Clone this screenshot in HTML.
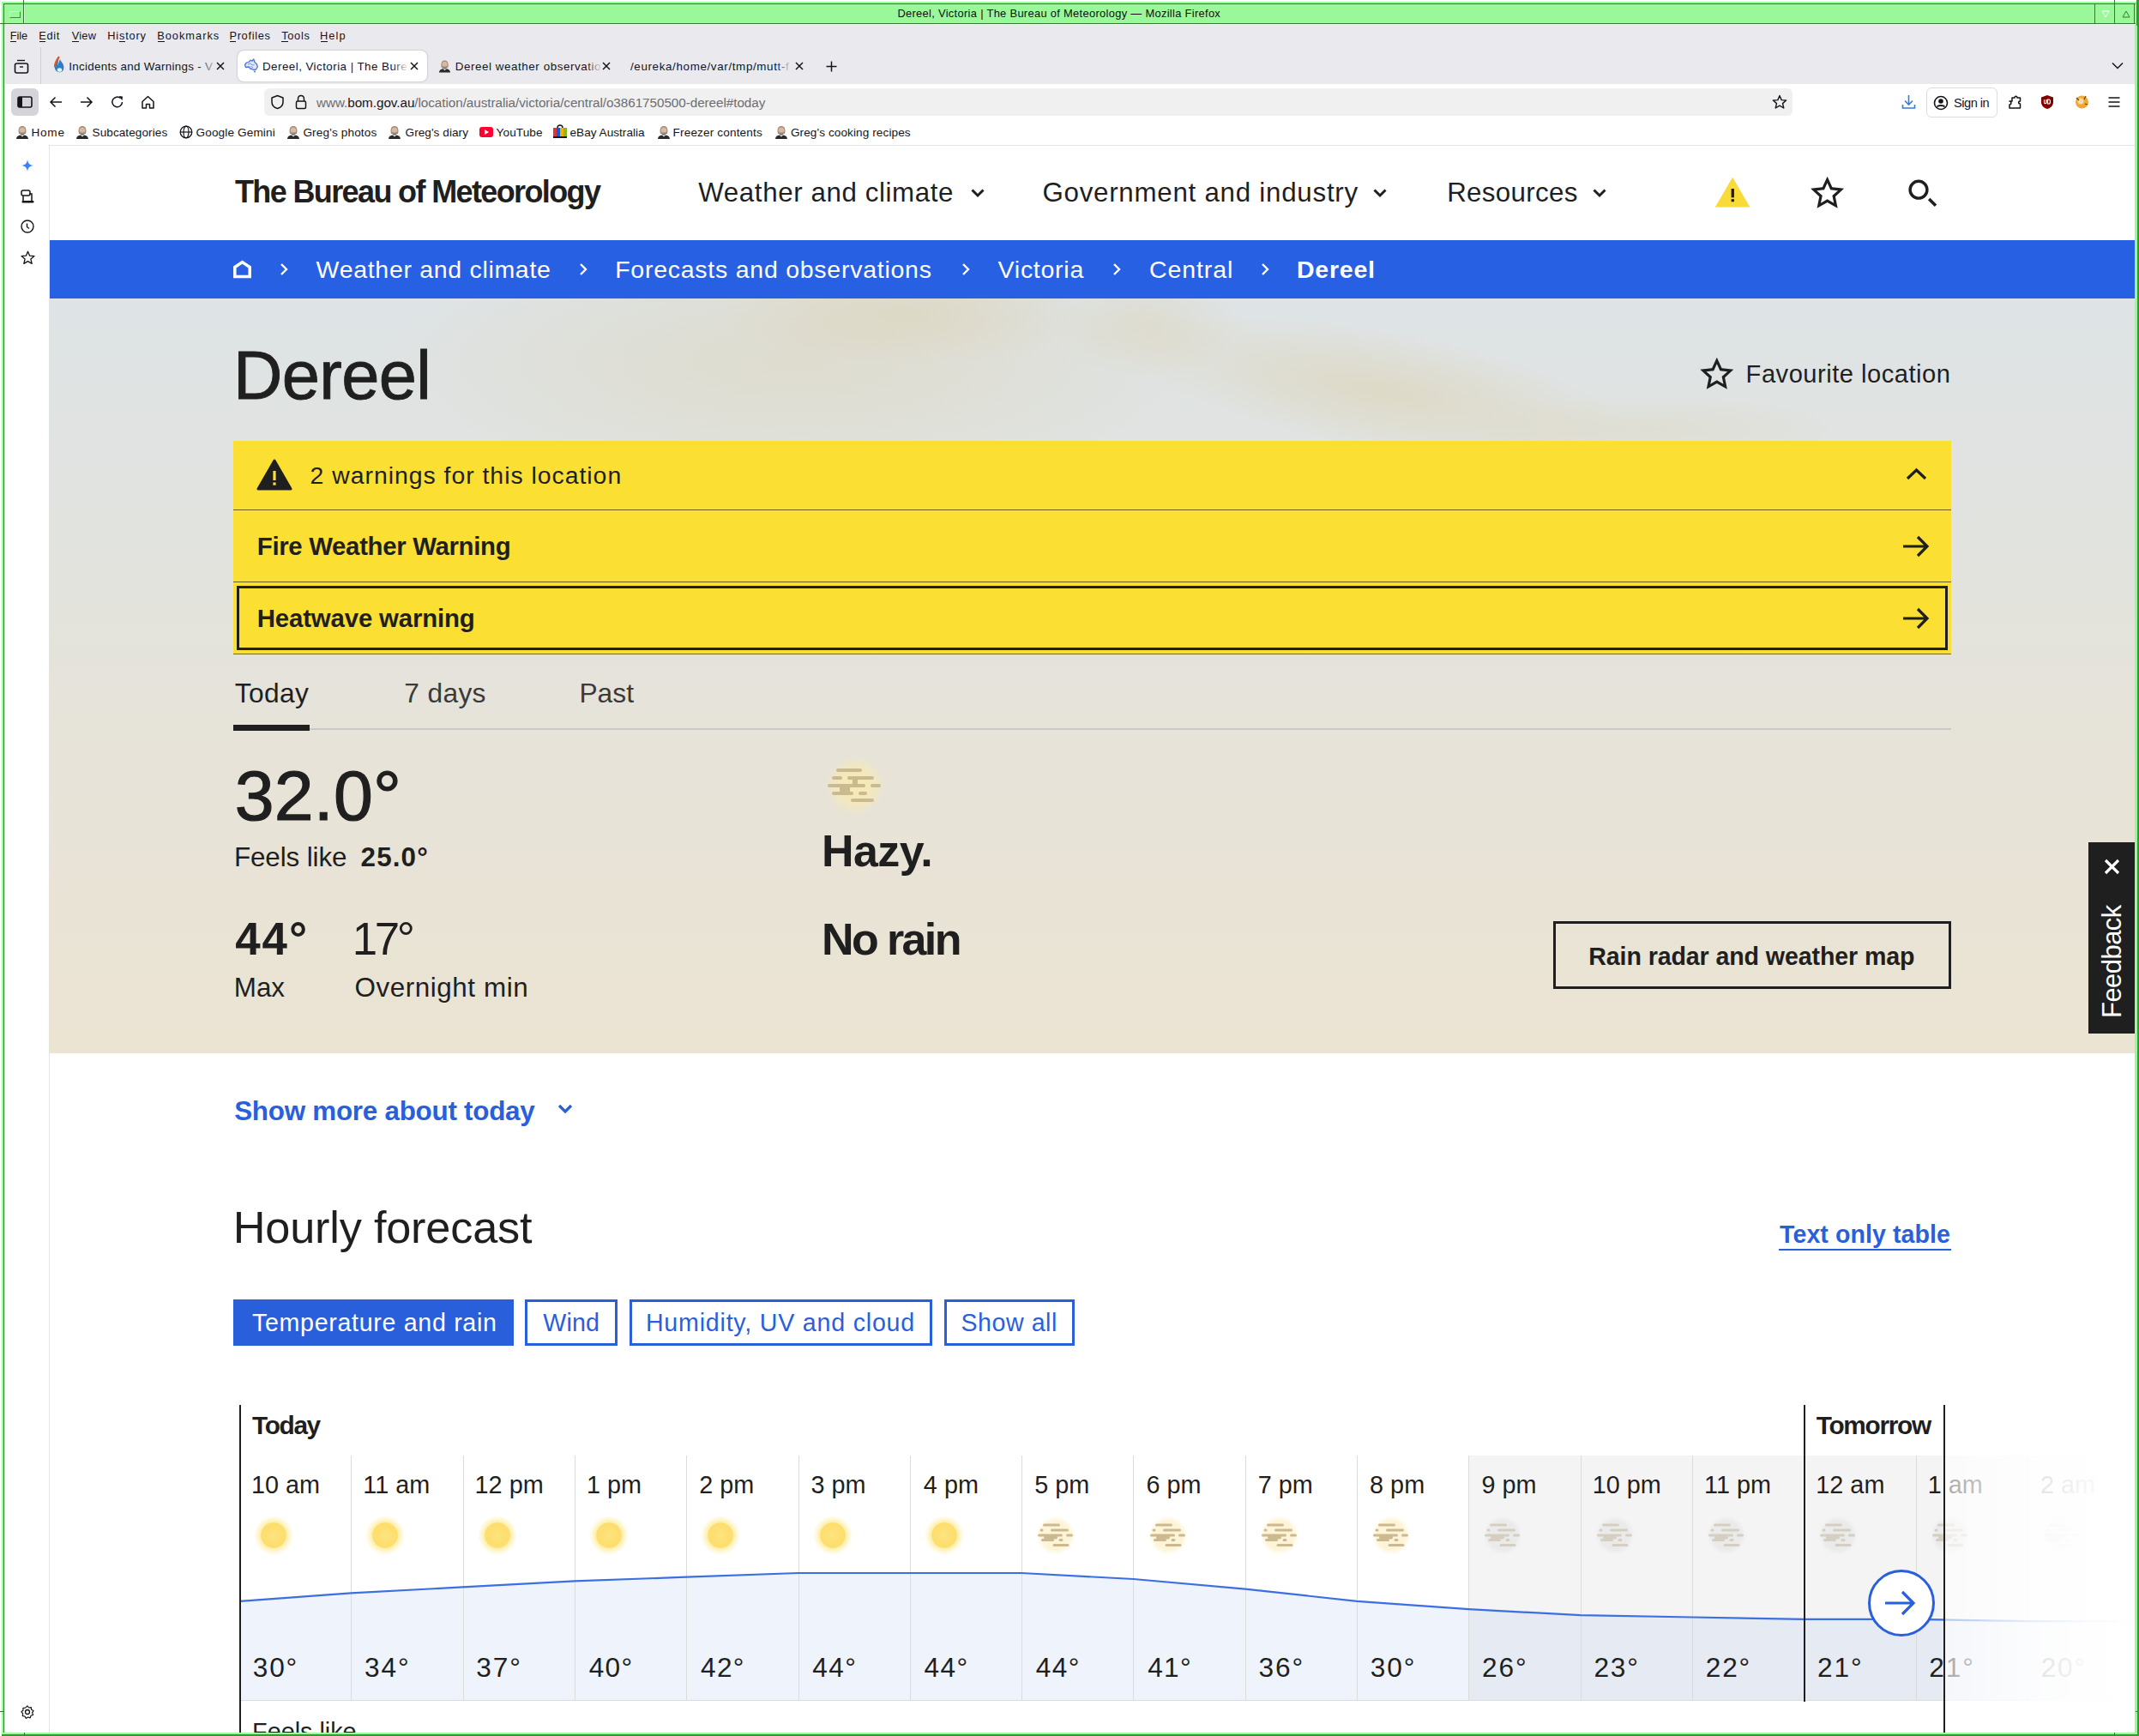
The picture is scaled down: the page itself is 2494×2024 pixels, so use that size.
<!DOCTYPE html>
<html><head><meta charset="utf-8">
<style>
html,body{margin:0;padding:0;}
body{width:2494px;height:2024px;overflow:hidden;position:relative;background:#fff;font-family:"Liberation Sans",sans-serif;}
.a{position:absolute;}
.t{position:absolute;white-space:nowrap;line-height:1;}
svg{position:absolute;overflow:visible;}
</style></head><body>
<!-- window frame -->
<div class="a" style="left:2px;top:2px;width:2492px;height:2022px;background:#9af89a;"></div>
<div class="a" style="left:2492px;top:30px;width:2px;height:1994px;background:#339933;"></div>
<div class="a" style="left:2px;top:2022px;width:2492px;height:2px;background:#339933;"></div>
<div class="a" style="left:4px;top:4px;width:1px;height:2016px;background:#2f7f2f;"></div>
<div class="a" style="left:4px;top:4px;width:2486px;height:1px;background:#2f7f2f;"></div>
<div class="a" style="left:0px;top:27px;width:2490px;height:1px;background:#2f7f2f;"></div>
<div class="a" style="left:27px;top:0px;width:1px;height:28px;background:#2f7f2f;"></div>
<div class="a" style="left:28px;top:5px;width:1px;height:22px;background:#d8ffd8;"></div>
<div class="a" style="left:5px;top:28px;width:1px;height:1992px;background:#e6ffe6;"></div>
<div class="a" style="left:5px;top:28px;width:2485px;height:1px;background:#e6ffe6;"></div>
<div class="a" style="left:11px;top:13px;width:11px;height:6px;border:1px solid #3a8a3a;border-top-color:#c8ffc8;border-left-color:#c8ffc8;"></div>
<div class="a" style="left:2442px;top:5px;width:1px;height:22px;background:#2f7f2f;"></div>
<div class="a" style="left:2465px;top:0px;width:1px;height:27px;background:#2f7f2f;"></div>
<div class="a" style="left:2488px;top:5px;width:1px;height:22px;background:#2f7f2f;"></div>
<div class="a" style="left:2491px;top:0px;width:3px;height:30px;background:#339933;"></div>
<svg style="left:2450px;top:12px" width="12" height="10"><path d="M1 1 L9 1 L5 8 Z" fill="none" stroke="#fff" stroke-width="1"/></svg>
<svg style="left:2474px;top:12px" width="12" height="10"><path d="M5 1 L9 8 L1 8 Z" fill="none" stroke="#2f7f2f" stroke-width="1"/></svg>

<!-- browser chrome -->
<div class="a" style="left:6px;top:29px;width:2483px;height:69px;background:#eaeaee;"></div>
<div class="a" style="left:6px;top:98px;width:2483px;height:71px;background:#ffffff;"></div>
<!-- menu underlines -->
<div class="a" style="left:12px;top:48px;width:7px;height:1px;background:#15141a;"></div>
<div class="a" style="left:46px;top:48px;width:7px;height:1px;background:#15141a;"></div>
<div class="a" style="left:84px;top:48px;width:8px;height:1px;background:#15141a;"></div>
<div class="a" style="left:139px;top:48px;width:7px;height:1px;background:#15141a;"></div>
<div class="a" style="left:184px;top:48px;width:8px;height:1px;background:#15141a;"></div>
<div class="a" style="left:268px;top:48px;width:7px;height:1px;background:#15141a;"></div>
<div class="a" style="left:328px;top:48px;width:8px;height:1px;background:#15141a;"></div>
<div class="a" style="left:374px;top:48px;width:8px;height:1px;background:#15141a;"></div>

<!-- tab strip -->
<svg style="left:16px;top:69px" width="18" height="18"><path d="M4 1.5 H13" stroke="#15141a" stroke-width="1.4"/><rect x="1.5" y="5" width="15" height="11" rx="2" fill="none" stroke="#15141a" stroke-width="1.6"/><path d="M7 9 H11" stroke="#15141a" stroke-width="1.4"/></svg>
<div class="a" style="left:47px;top:55px;width:1px;height:43px;background:#cfcfd4;"></div>
<!-- tab1 favicon (flame) -->
<svg style="left:61px;top:64px" width="16" height="22"><path d="M8 2 C3 8 2 12 3 16 C4 20 8 21 10 20 C13 19 14 16 13 12 C12 9 10 8 9 5 C8 8 7 10 6 13 Z" fill="#2b7fc1"/><path d="M8 2 C5 6 3 9 3 14" stroke="#e2562a" stroke-width="2.2" fill="none"/><ellipse cx="8.5" cy="17.5" rx="2.8" ry="2.3" fill="#e8f2fa"/></svg>
<div class="a" style="left:232px;top:64px;width:22px;height:26px;background:linear-gradient(90deg, rgba(234,234,238,0) 0%, #eaeaee 100%);z-index:2"></div>
<svg style="left:252px;top:72px;z-index:3" width="10" height="10"><path d="M1 1 L9 9 M9 1 L1 9" stroke="#15141a" stroke-width="1.5"/></svg>
<!-- active tab -->
<div class="a" style="left:277px;top:59px;width:221px;height:36px;background:#fff;border-radius:7px;box-shadow:0 0 2px rgba(0,0,0,0.35);"></div>
<svg style="left:284px;top:67px" width="18" height="18"><path d="M1.5 8.5 L3.5 6 L6.5 5 L8 3.2 L10 4.2 L11.8 2 L13 5.5 L15.5 8 L16.3 11 L14.5 14 L11.5 14.5 L10 13.5 L7.5 13 L6.5 11 L2.5 11.5 Z" fill="#dde6fb" stroke="#4f74d6" stroke-width="1.3" stroke-linejoin="round"/><path d="M5 8 L8 7 L10 9 L12.5 8.5 M8.5 10.5 L11 12" fill="none" stroke="#6f8fe0" stroke-width="0.9"/><circle cx="13" cy="16.5" r="1" fill="#4f74d6"/></svg>
<div class="a" style="left:458px;top:64px;width:18px;height:26px;background:linear-gradient(90deg, rgba(255,255,255,0) 0%, #fff 100%);z-index:2"></div>
<svg style="left:478px;top:72px;z-index:3" width="10" height="10"><path d="M1 1 L9 9 M9 1 L1 9" stroke="#15141a" stroke-width="1.5"/></svg>
<!-- tab3 -->
<svg style="left:511px;top:69px" width="15" height="16" viewBox="0 0 16 16"><path d="M3.5 7 C3.5 2.5 5.5 1 8 1 C10.5 1 12.5 2.5 12.5 7 L12 10 L4 10 Z" fill="#a58a74"/><ellipse cx="8" cy="6.5" rx="3.4" ry="4" fill="#d9b9a0"/><path d="M4.4 6.8 C4.4 13.5 11.6 13.5 11.6 6.8 C10.5 9.2 5.5 9.2 4.4 6.8 Z" fill="#9a9088"/><path d="M6 10 C7 11 9 11 10 10" stroke="#6a5f58" stroke-width="0.8" fill="none"/><path d="M1 16 C1.5 12.5 4 11.8 6 11.5 L8 13.5 L10 11.5 C12 11.8 14.5 12.5 15 16 Z" fill="#2a2a2a"/></svg>
<div class="a" style="left:684px;top:64px;width:18px;height:26px;background:linear-gradient(90deg, rgba(234,234,238,0) 0%, #eaeaee 100%);z-index:2"></div>
<svg style="left:702px;top:72px;z-index:3" width="10" height="10"><path d="M1 1 L9 9 M9 1 L1 9" stroke="#15141a" stroke-width="1.5"/></svg>
<!-- tab4 -->
<div class="a" style="left:905px;top:64px;width:18px;height:26px;background:linear-gradient(90deg, rgba(234,234,238,0) 0%, #eaeaee 100%);z-index:2"></div>
<svg style="left:927px;top:72px;z-index:3" width="10" height="10"><path d="M1 1 L9 9 M9 1 L1 9" stroke="#15141a" stroke-width="1.5"/></svg>
<svg style="left:963px;top:71px" width="13" height="13"><path d="M6.5 0.5 V12.5 M0.5 6.5 H12.5" stroke="#15141a" stroke-width="1.5"/></svg>
<svg style="left:2462px;top:72px" width="14" height="9"><path d="M1 1.5 L7 7.5 L13 1.5" fill="none" stroke="#15141a" stroke-width="1.5"/></svg>

<!-- nav bar -->
<div class="a" style="left:13px;top:103px;width:32px;height:32px;background:#d4d4da;border-radius:6px;"></div>
<svg style="left:20px;top:112px" width="18" height="14"><rect x="1" y="1" width="16" height="12" rx="2" fill="none" stroke="#15141a" stroke-width="1.6"/><rect x="1" y="1" width="5" height="12" fill="#15141a"/></svg>
<svg style="left:57px;top:112px" width="16" height="14"><path d="M15 7 H2 M7.5 1.5 L2 7 L7.5 12.5" fill="none" stroke="#15141a" stroke-width="1.5"/></svg>
<svg style="left:93px;top:112px" width="16" height="14"><path d="M1 7 H14 M8.5 1.5 L14 7 L8.5 12.5" fill="none" stroke="#15141a" stroke-width="1.5"/></svg>
<svg style="left:129px;top:111px" width="16" height="16"><path d="M13.5 8 A5.8 5.8 0 1 1 11.5 3.5" fill="none" stroke="#15141a" stroke-width="1.5"/><path d="M9.5 1 L14 1.5 L13.5 6 Z" fill="#15141a"/></svg>
<svg style="left:164px;top:111px" width="17" height="16"><path d="M2 7.5 L8.5 1.5 L15 7.5 V15 H10.5 V10.5 H6.5 V15 H2 Z" fill="none" stroke="#15141a" stroke-width="1.5" stroke-linejoin="round"/></svg>
<div class="a" style="left:308px;top:103px;width:1782px;height:32px;background:#f0f0f0;border-radius:6px;"></div>
<svg style="left:315px;top:110px" width="17" height="18"><path d="M8.5 1.5 L15 4 V9 C15 13 12 15.5 8.5 16.5 C5 15.5 2 13 2 9 V4 Z" fill="none" stroke="#15141a" stroke-width="1.5" stroke-linejoin="round"/></svg>
<svg style="left:344px;top:110px" width="14" height="18"><path d="M3.5 8 V5.5 C3.5 3 5 1.5 7 1.5 C9 1.5 10.5 3 10.5 5.5 V8" fill="none" stroke="#15141a" stroke-width="1.5"/><rect x="1.5" y="8" width="11" height="8.5" rx="1.5" fill="none" stroke="#15141a" stroke-width="1.5"/></svg>
<div class="t" style="left:369px;top:111.5px;font-size:15.25px;color:#6d6d72;letter-spacing:-0.05px;">www.<span style="color:#15141a">bom.gov.au</span>/location/australia/victoria/central/o3861750500-dereel#today</div>
<svg style="left:2066px;top:110px" width="18" height="18"><path d="M9 1.5 L11.2 6.6 L16.6 7 L12.5 10.6 L13.8 16 L9 13.2 L4.2 16 L5.5 10.6 L1.4 7 L6.8 6.6 Z" fill="none" stroke="#15141a" stroke-width="1.4" stroke-linejoin="round"/></svg>
<svg style="left:2217px;top:110px" width="17" height="18"><path d="M8.5 1 V12 M4 7.5 L8.5 12 L13 7.5" fill="none" stroke="#3a7bd5" stroke-width="1.6"/><path d="M1.5 12 V16 H15.5 V12" fill="none" stroke="#3a7bd5" stroke-width="1.6"/></svg>
<div class="a" style="left:2246px;top:102px;width:81px;height:33px;border:1px solid #dcdce0;border-radius:6px;"></div>
<svg style="left:2254px;top:111px" width="18" height="18"><circle cx="9" cy="9" r="7.5" fill="none" stroke="#15141a" stroke-width="1.6"/><circle cx="9" cy="7" r="2.8" fill="#15141a"/><path d="M4.5 13.5 C6 11.5 12 11.5 13.5 13.5" stroke="#15141a" stroke-width="2" fill="none"/></svg>
<svg style="left:2341px;top:110px" width="17" height="18"><path d="M2 8 H5 V4 H8 C8 1.5 11 1.5 11 4 H14.5 V8 C12 8 12 11 14.5 11 V16 H2 V12 C4.5 12 4.5 8 2 8 Z" fill="none" stroke="#15141a" stroke-width="1.5" stroke-linejoin="round"/></svg>
<svg style="left:2379px;top:110px" width="16" height="18"><path d="M8 1 L15 3.5 V9 C15 13 12 16 8 17 C4 16 1 13 1 9 V3.5 Z" fill="#800000"/><path d="M4.5 6 V9.5 C4.5 11 7 11 7 9.5 V6 M8.5 6 V11 H10 C12 11 12 6 10 6 Z" fill="none" stroke="#fff" stroke-width="1.2"/></svg>
<svg style="left:2418px;top:109px" width="19" height="19"><circle cx="9.5" cy="10" r="7.5" fill="#f0a830"/><circle cx="8" cy="9" r="3.5" fill="#fff" opacity="0.6"/><path d="M3 5 L6 8 M14 3 L12 7 M16 13 L13 12" stroke="#6a4a10" stroke-width="1.3"/></svg>
<svg style="left:2457px;top:112px" width="16" height="14"><path d="M1.5 2 H14.5 M1.5 7 H14.5 M1.5 12 H14.5" stroke="#15141a" stroke-width="1.5"/></svg>

<!-- bookmarks icons -->
<svg style="left:18px;top:146px" width="16" height="16" viewBox="0 0 16 16"><path d="M3.5 7 C3.5 2.5 5.5 1 8 1 C10.5 1 12.5 2.5 12.5 7 L12 10 L4 10 Z" fill="#a58a74"/><ellipse cx="8" cy="6.5" rx="3.4" ry="4" fill="#d9b9a0"/><path d="M4.4 6.8 C4.4 13.5 11.6 13.5 11.6 6.8 C10.5 9.2 5.5 9.2 4.4 6.8 Z" fill="#9a9088"/><path d="M6 10 C7 11 9 11 10 10" stroke="#6a5f58" stroke-width="0.8" fill="none"/><path d="M1 16 C1.5 12.5 4 11.8 6 11.5 L8 13.5 L10 11.5 C12 11.8 14.5 12.5 15 16 Z" fill="#2a2a2a"/></svg>
<svg style="left:88px;top:146px" width="16" height="16" viewBox="0 0 16 16"><path d="M3.5 7 C3.5 2.5 5.5 1 8 1 C10.5 1 12.5 2.5 12.5 7 L12 10 L4 10 Z" fill="#a58a74"/><ellipse cx="8" cy="6.5" rx="3.4" ry="4" fill="#d9b9a0"/><path d="M4.4 6.8 C4.4 13.5 11.6 13.5 11.6 6.8 C10.5 9.2 5.5 9.2 4.4 6.8 Z" fill="#9a9088"/><path d="M6 10 C7 11 9 11 10 10" stroke="#6a5f58" stroke-width="0.8" fill="none"/><path d="M1 16 C1.5 12.5 4 11.8 6 11.5 L8 13.5 L10 11.5 C12 11.8 14.5 12.5 15 16 Z" fill="#2a2a2a"/></svg>
<svg style="left:209px;top:146px" width="16" height="16"><circle cx="8" cy="8" r="6.8" fill="none" stroke="#15141a" stroke-width="1.3"/><ellipse cx="8" cy="8" rx="3" ry="6.8" fill="none" stroke="#15141a" stroke-width="1.2"/><path d="M1.2 8 H14.8" stroke="#15141a" stroke-width="1.2"/></svg>
<svg style="left:334px;top:146px" width="16" height="16" viewBox="0 0 16 16"><path d="M3.5 7 C3.5 2.5 5.5 1 8 1 C10.5 1 12.5 2.5 12.5 7 L12 10 L4 10 Z" fill="#a58a74"/><ellipse cx="8" cy="6.5" rx="3.4" ry="4" fill="#d9b9a0"/><path d="M4.4 6.8 C4.4 13.5 11.6 13.5 11.6 6.8 C10.5 9.2 5.5 9.2 4.4 6.8 Z" fill="#9a9088"/><path d="M6 10 C7 11 9 11 10 10" stroke="#6a5f58" stroke-width="0.8" fill="none"/><path d="M1 16 C1.5 12.5 4 11.8 6 11.5 L8 13.5 L10 11.5 C12 11.8 14.5 12.5 15 16 Z" fill="#2a2a2a"/></svg>
<svg style="left:452px;top:146px" width="16" height="16" viewBox="0 0 16 16"><path d="M3.5 7 C3.5 2.5 5.5 1 8 1 C10.5 1 12.5 2.5 12.5 7 L12 10 L4 10 Z" fill="#a58a74"/><ellipse cx="8" cy="6.5" rx="3.4" ry="4" fill="#d9b9a0"/><path d="M4.4 6.8 C4.4 13.5 11.6 13.5 11.6 6.8 C10.5 9.2 5.5 9.2 4.4 6.8 Z" fill="#9a9088"/><path d="M6 10 C7 11 9 11 10 10" stroke="#6a5f58" stroke-width="0.8" fill="none"/><path d="M1 16 C1.5 12.5 4 11.8 6 11.5 L8 13.5 L10 11.5 C12 11.8 14.5 12.5 15 16 Z" fill="#2a2a2a"/></svg>
<svg style="left:559px;top:148px" width="16" height="12"><rect x="0" y="0" width="16" height="12" rx="3" fill="#ff0033"/><path d="M6 3 L11 6 L6 9 Z" fill="#fff"/></svg>
<svg style="left:645px;top:144px" width="16" height="18"><path d="M5 5 C5 1 11 1 11 5" stroke="#15141a" stroke-width="1.4" fill="none"/><rect x="0" y="5" width="4" height="12" fill="#e53238"/><rect x="4" y="5" width="4" height="12" fill="#0064d2"/><rect x="8" y="5" width="4" height="12" fill="#f5af02"/><rect x="12" y="5" width="4" height="12" fill="#86b817"/><rect x="0" y="15" width="16" height="2" fill="#15141a"/></svg>
<svg style="left:766px;top:146px" width="16" height="16" viewBox="0 0 16 16"><path d="M3.5 7 C3.5 2.5 5.5 1 8 1 C10.5 1 12.5 2.5 12.5 7 L12 10 L4 10 Z" fill="#a58a74"/><ellipse cx="8" cy="6.5" rx="3.4" ry="4" fill="#d9b9a0"/><path d="M4.4 6.8 C4.4 13.5 11.6 13.5 11.6 6.8 C10.5 9.2 5.5 9.2 4.4 6.8 Z" fill="#9a9088"/><path d="M6 10 C7 11 9 11 10 10" stroke="#6a5f58" stroke-width="0.8" fill="none"/><path d="M1 16 C1.5 12.5 4 11.8 6 11.5 L8 13.5 L10 11.5 C12 11.8 14.5 12.5 15 16 Z" fill="#2a2a2a"/></svg>
<svg style="left:903px;top:146px" width="16" height="16" viewBox="0 0 16 16"><path d="M3.5 7 C3.5 2.5 5.5 1 8 1 C10.5 1 12.5 2.5 12.5 7 L12 10 L4 10 Z" fill="#a58a74"/><ellipse cx="8" cy="6.5" rx="3.4" ry="4" fill="#d9b9a0"/><path d="M4.4 6.8 C4.4 13.5 11.6 13.5 11.6 6.8 C10.5 9.2 5.5 9.2 4.4 6.8 Z" fill="#9a9088"/><path d="M6 10 C7 11 9 11 10 10" stroke="#6a5f58" stroke-width="0.8" fill="none"/><path d="M1 16 C1.5 12.5 4 11.8 6 11.5 L8 13.5 L10 11.5 C12 11.8 14.5 12.5 15 16 Z" fill="#2a2a2a"/></svg>


<!-- content area -->
<div class="a" style="left:6px;top:169px;width:2483px;height:1851px;background:#ffffff;"></div>
<div class="a" style="left:57px;top:169px;width:2432px;height:1px;background:#e3e3e8;"></div>
<div class="a" style="left:57px;top:169px;width:1px;height:1851px;background:#e3e3e8;"></div>
<svg style="left:25px;top:186px" width="14" height="14"><path d="M7 0 C7.6 4.5 9.5 6.4 14 7 C9.5 7.6 7.6 9.5 7 14 C6.4 9.5 4.5 7.6 0 7 C4.5 6.4 6.4 4.5 7 0 Z" fill="#3b82f6"/></svg>
<svg style="left:24px;top:221px" width="17" height="17"><rect x="1" y="1" width="10" height="6" rx="2" fill="none" stroke="#15141a" stroke-width="1.5"/><path d="M10 5 H13 V13" fill="none" stroke="#15141a" stroke-width="1.5"/><path d="M3 7 V13" stroke="#15141a" stroke-width="1.5"/><rect x="1.5" y="13" width="14" height="2.5" rx="1" fill="#15141a"/></svg>
<svg style="left:24px;top:256px" width="16" height="16"><circle cx="8" cy="8" r="7" fill="none" stroke="#15141a" stroke-width="1.4"/><path d="M7.5 4.5 V8.5 L10 10.5" fill="none" stroke="#15141a" stroke-width="1.4"/></svg>
<svg style="left:24px;top:292px" width="17" height="17"><path d="M8.5 1.2 L10.6 6.2 L16 6.6 L11.9 10.1 L13.2 15.4 L8.5 12.6 L3.8 15.4 L5.1 10.1 L1 6.6 L6.4 6.2 Z" fill="none" stroke="#15141a" stroke-width="1.3" stroke-linejoin="round"/></svg>
<svg style="left:24px;top:1988px" width="16" height="16"><circle cx="8" cy="8" r="2.5" fill="none" stroke="#15141a" stroke-width="1.3"/><path d="M8 1 L9.6 3 L12.3 2.6 L12.6 5.2 L15 6.6 L13.6 8.9 L14.6 11.5 L12 12.3 L11.2 14.9 L8.6 14 L6.3 15.4 L5 13 L2.3 12.6 L2.7 9.9 L1 7.8 L3 6 L2.9 3.3 L5.6 3.1 Z" fill="none" stroke="#15141a" stroke-width="1.2" stroke-linejoin="round"/></svg>

<!-- header icons -->
<svg style="left:1131px;top:218px" width="18" height="14"><path d="M2.5 3.5 L9 10 L15.5 3.5" fill="none" stroke="#1f1f1f" stroke-width="3"/></svg>
<svg style="left:1600px;top:218px" width="18" height="14"><path d="M2.5 3.5 L9 10 L15.5 3.5" fill="none" stroke="#1f1f1f" stroke-width="3"/></svg>
<svg style="left:1856px;top:218px" width="18" height="14"><path d="M2.5 3.5 L9 10 L15.5 3.5" fill="none" stroke="#1f1f1f" stroke-width="3"/></svg>
<svg style="left:1996px;top:203px" width="48" height="42"><path d="M24.1 3.8 L44.4 38.5 L3.8 38.5 Z" fill="#f9db38"/><rect x="22.6" y="17" width="3.3" height="10.3" fill="#22180a"/><rect x="22.6" y="29.2" width="3.3" height="3" fill="#22180a"/></svg>
<svg style="left:0;top:0" width="2494" height="300"><path d="M2130.60 205.70 L2136.36 218.27 L2150.10 219.87 L2139.92 229.23 L2142.65 242.78 L2130.60 236.00 L2118.55 242.78 L2121.28 229.23 L2111.10 219.87 L2124.84 218.27 Z M2127.01 221.26 L2118.24 222.18 L2124.80 228.09 L2122.96 236.72 L2130.60 232.30 L2138.24 236.72 L2136.40 228.09 L2142.96 222.18 L2134.19 221.26 L2130.60 213.20 Z" fill="#1f1f1f" fill-rule="evenodd"/></svg>
<svg style="left:2220px;top:204px" width="44" height="44"><circle cx="17" cy="17.2" r="9.9" fill="none" stroke="#1f1f1f" stroke-width="3.4"/><path d="M29.2 28 L37 35.8" stroke="#1f1f1f" stroke-width="3.6" stroke-linecap="butt"/></svg>

<!-- breadcrumb band -->
<div class="a" style="left:58px;top:280px;width:2431px;height:68px;background:#2860e4;"></div>
<svg style="left:270px;top:300px" width="26" height="26"><path d="M3.8 22.4 V11.5 L12.5 5.6 L21.2 11.5 V22.4 Z" fill="none" stroke="#fff" stroke-width="3.5" stroke-linejoin="miter"/></svg>
<svg style="left:324px;top:305px" width="14" height="18"><path d="M4 3 L10 9 L4 15" fill="none" stroke="#fff" stroke-width="2.4"/></svg>
<svg style="left:673px;top:305px" width="14" height="18"><path d="M4 3 L10 9 L4 15" fill="none" stroke="#fff" stroke-width="2.4"/></svg>
<svg style="left:1119px;top:305px" width="14" height="18"><path d="M4 3 L10 9 L4 15" fill="none" stroke="#fff" stroke-width="2.4"/></svg>
<svg style="left:1295px;top:305px" width="14" height="18"><path d="M4 3 L10 9 L4 15" fill="none" stroke="#fff" stroke-width="2.4"/></svg>
<svg style="left:1468px;top:305px" width="14" height="18"><path d="M4 3 L10 9 L4 15" fill="none" stroke="#fff" stroke-width="2.4"/></svg>

<!-- hero -->
<div class="a" style="left:58px;top:348px;width:2431px;height:880px;background:linear-gradient(180deg,#dee3e5 0%,#e1e3df 30%,#e7e3d8 62%,#ebe4d3 100%);overflow:hidden;">
  <div class="a" style="left:392px;top:-78px;width:960px;height:300px;background:radial-gradient(ellipse closest-side, rgba(220,203,158,0.3) 0%, rgba(220,203,158,0.165) 50%, rgba(220,203,158,0) 100%);"></div>
  <div class="a" style="left:782px;top:-43px;width:440px;height:120px;background:radial-gradient(ellipse closest-side, rgba(220,203,158,0.32) 0%, rgba(220,203,158,0.176) 50%, rgba(220,203,158,0) 100%);"></div>
  <div class="a" style="left:1172px;top:-28px;width:220px;height:120px;background:radial-gradient(ellipse closest-side, rgba(220,203,158,0.28) 0%, rgba(220,203,158,0.154) 50%, rgba(220,203,158,0) 100%);"></div>
  <div class="a" style="left:1252px;top:37px;width:600px;height:140px;transform:rotate(10deg);background:radial-gradient(ellipse closest-side, rgba(220,203,158,0.4) 0%, rgba(220,203,158,0.220) 50%, rgba(220,203,158,0) 100%);"></div>
  <div class="a" style="left:1652px;top:112px;width:440px;height:80px;background:radial-gradient(ellipse closest-side, rgba(220,203,158,0.2) 0%, rgba(220,203,158,0.110) 50%, rgba(220,203,158,0) 100%);"></div>
  <div class="a" style="left:542px;top:292px;width:1400px;height:120px;background:radial-gradient(ellipse closest-side, rgba(220,203,158,0.1) 0%, rgba(220,203,158,0.055) 50%, rgba(220,203,158,0) 100%);"></div>
</div>

<!-- warnings -->
<div class="a" style="left:272px;top:514px;width:2003px;height:249px;background:#fbdf33;"></div>
<div class="a" style="left:272px;top:594px;width:2003px;height:1px;background:#6b5e1a;"></div>
<div class="a" style="left:272px;top:678px;width:2003px;height:1px;background:#6b5e1a;"></div>
<div class="a" style="left:276px;top:683px;width:1989px;height:69px;border:3px solid #1f1f1f;"></div>
<div class="a" style="left:272px;top:762px;width:2003px;height:1px;background:#7a6a1c;"></div>
<svg style="left:298px;top:533px" width="46" height="42"><path d="M22 4 L41 37 L3 37 Z" fill="#1f1f1f" stroke="#1f1f1f" stroke-width="3" stroke-linejoin="round"/><rect x="20.4" y="16" width="3.2" height="11" fill="#fbdf33"/><rect x="20.4" y="29.5" width="3.2" height="3.2" fill="#fbdf33"/></svg>
<svg style="left:2218px;top:542px" width="34" height="22"><path d="M6 16 L16.5 6 L27 16" fill="none" stroke="#1f1f1f" stroke-width="3.2"/></svg>
<svg style="left:2216px;top:622px" width="36" height="30"><path d="M3 15 H31 M20 4 L31 15 L20 26" fill="none" stroke="#1f1f1f" stroke-width="3.2"/></svg>
<svg style="left:2216px;top:706px" width="36" height="30"><path d="M3 15 H31 M20 4 L31 15 L20 26" fill="none" stroke="#1f1f1f" stroke-width="3.2"/></svg>
<!-- favourite star -->
<svg style="left:0;top:0" width="2494" height="500"><path d="M2001.80 416.70 L2007.56 429.27 L2021.30 430.87 L2011.12 440.23 L2013.85 453.78 L2001.80 447.00 L1989.75 453.78 L1992.48 440.23 L1982.30 430.87 L1996.04 429.27 Z M1998.21 432.26 L1989.44 433.18 L1996.00 439.09 L1994.16 447.72 L2001.80 443.30 L2009.44 447.72 L2007.60 439.09 L2014.16 433.18 L2005.39 432.26 L2001.80 424.20 Z" fill="#1f1f1f" fill-rule="evenodd"/></svg>

<!-- tabs -->
<div class="a" style="left:272px;top:849px;width:2003px;height:2px;background:#c9c9c6;"></div>
<div class="a" style="left:272px;top:845px;width:89px;height:7px;background:#1f1f1f;"></div>

<!-- haze icon hero -->
<div class="a" style="left:962px;top:881px;width:70px;height:70px;border-radius:50%;background:radial-gradient(circle closest-side, rgba(250,236,170,0.85) 0%, rgba(250,236,170,0.6) 55%, rgba(250,236,170,0) 100%);"></div>
<svg style="left:960px;top:890px" width="75" height="50">
<g stroke="#cbb98f" stroke-width="4" stroke-linecap="round">
<path d="M17 8 H43"/><path d="M12 17 H20 M30 17 H57"/><path d="M7 26 H47 M57 26 H65"/><path d="M12 35 H33 M43 35 H49"/><path d="M34 43 H57"/>
</g><rect x="34" y="18" width="6" height="8" fill="#cbb98f"/><rect x="19" y="27" width="12" height="8" fill="#cbb98f"/></svg>

<!-- radar button -->
<div class="a" style="left:1811px;top:1074px;width:458px;height:73px;border:3px solid #1f1f1f;"></div>
<!-- feedback -->
<div class="a" style="left:2435px;top:982px;width:54px;height:223px;background:#1f1f1f;"></div>
<svg style="left:2452px;top:1000px" width="20" height="20"><path d="M3 3 L18 18 M18 3 L3 18" stroke="#fff" stroke-width="3.2"/></svg>
<div class="t" style="left:2447px;top:1187px;font-size:31px;color:#fff;transform-origin:0 0;transform:rotate(-90deg);letter-spacing:-0.55px;">Feedback</div>

<!-- show more chevron -->
<svg style="left:648px;top:1284px" width="24" height="20"><path d="M4 5 L11 12 L18 5" fill="none" stroke="#2a5fdb" stroke-width="3.2"/></svg>
<!-- text only underline -->
<div class="a" style="left:2074px;top:1456px;width:201px;height:2px;background:#2a5fdb;"></div>

<!-- filter buttons -->
<div class="a" style="left:272px;top:1515px;width:327px;height:54px;background:#2a5fdb;"></div>
<div class="a" style="left:612px;top:1515px;width:102px;height:48px;border:3px solid #2a5fdb;"></div>
<div class="a" style="left:734px;top:1515px;width:347px;height:48px;border:3px solid #2a5fdb;"></div>
<div class="a" style="left:1101px;top:1515px;width:146px;height:48px;border:3px solid #2a5fdb;"></div>

<div class="a" style="left:1712px;top:1697px;width:777px;height:285px;background:#f4f4f4;"></div>
<svg style="left:0;top:0;overflow:hidden" width="2489" height="2024"><defs><clipPath id="day"><rect x="280" y="1600" width="1432" height="400"/></clipPath><clipPath id="night"><rect x="1712" y="1600" width="800" height="400"/></clipPath></defs><path d="M280.0 1866.8 L409.3 1857.4 L539.6 1850.4 L669.9 1843.4 L800.2 1838.7 L930.5 1834.0 L1060.9 1834.0 L1191.2 1834.0 L1321.5 1841.0 L1451.8 1852.7 L1582.1 1866.8 L1712.4 1876.2 L1842.7 1883.2 L1973.0 1885.5 L2103.3 1887.9 L2233.7 1887.9 L2364.0 1890.2 L2494.3 1890.2 L2494.3 1982 L280 1982 Z" fill="#eef3fc" clip-path="url(#day)"/><path d="M280.0 1866.8 L409.3 1857.4 L539.6 1850.4 L669.9 1843.4 L800.2 1838.7 L930.5 1834.0 L1060.9 1834.0 L1191.2 1834.0 L1321.5 1841.0 L1451.8 1852.7 L1582.1 1866.8 L1712.4 1876.2 L1842.7 1883.2 L1973.0 1885.5 L2103.3 1887.9 L2233.7 1887.9 L2364.0 1890.2 L2494.3 1890.2 L2494.3 1982 L280 1982 Z" fill="#e5eaf3" clip-path="url(#night)"/><rect x="409" y="1697" width="1" height="285" fill="#dcdcdc"/><rect x="540" y="1697" width="1" height="285" fill="#dcdcdc"/><rect x="670" y="1697" width="1" height="285" fill="#dcdcdc"/><rect x="800" y="1697" width="1" height="285" fill="#dcdcdc"/><rect x="931" y="1697" width="1" height="285" fill="#dcdcdc"/><rect x="1061" y="1697" width="1" height="285" fill="#dcdcdc"/><rect x="1191" y="1697" width="1" height="285" fill="#dcdcdc"/><rect x="1321" y="1697" width="1" height="285" fill="#dcdcdc"/><rect x="1452" y="1697" width="1" height="285" fill="#dcdcdc"/><rect x="1582" y="1697" width="1" height="285" fill="#dcdcdc"/><rect x="1712" y="1697" width="1" height="285" fill="#dcdcdc"/><rect x="1843" y="1697" width="1" height="285" fill="#dcdcdc"/><rect x="1973" y="1697" width="1" height="285" fill="#dcdcdc"/><rect x="2103" y="1697" width="1" height="285" fill="#dcdcdc"/><rect x="2234" y="1697" width="1" height="285" fill="#dcdcdc"/><rect x="2364" y="1697" width="1" height="285" fill="#dcdcdc"/><rect x="2494" y="1697" width="1" height="285" fill="#dcdcdc"/><rect x="280" y="1982" width="2209" height="1" fill="#dcdcdc"/><path d="M280.0 1866.8 L409.3 1857.4 L539.6 1850.4 L669.9 1843.4 L800.2 1838.7 L930.5 1834.0 L1060.9 1834.0 L1191.2 1834.0 L1321.5 1841.0 L1451.8 1852.7 L1582.1 1866.8 L1712.4 1876.2 L1842.7 1883.2 L1973.0 1885.5 L2103.3 1887.9 L2233.7 1887.9 L2364.0 1890.2 L2494.3 1890.2" fill="none" stroke="#3c6fe0" stroke-width="2.2"/></svg>
<div class="a" style="left:296.0px;top:1767px;width:46px;height:46px;border-radius:50%;background:radial-gradient(circle closest-side, #fde47e 0%, #fddd6c 62%, #fdeea8 66%, #fff6cf 80%, #fffae4 90%, rgba(255,252,235,0) 100%);"></div>
<div class="a" style="left:426.3px;top:1767px;width:46px;height:46px;border-radius:50%;background:radial-gradient(circle closest-side, #fde47e 0%, #fddd6c 62%, #fdeea8 66%, #fff6cf 80%, #fffae4 90%, rgba(255,252,235,0) 100%);"></div>
<div class="a" style="left:556.6px;top:1767px;width:46px;height:46px;border-radius:50%;background:radial-gradient(circle closest-side, #fde47e 0%, #fddd6c 62%, #fdeea8 66%, #fff6cf 80%, #fffae4 90%, rgba(255,252,235,0) 100%);"></div>
<div class="a" style="left:686.9px;top:1767px;width:46px;height:46px;border-radius:50%;background:radial-gradient(circle closest-side, #fde47e 0%, #fddd6c 62%, #fdeea8 66%, #fff6cf 80%, #fffae4 90%, rgba(255,252,235,0) 100%);"></div>
<div class="a" style="left:817.2px;top:1767px;width:46px;height:46px;border-radius:50%;background:radial-gradient(circle closest-side, #fde47e 0%, #fddd6c 62%, #fdeea8 66%, #fff6cf 80%, #fffae4 90%, rgba(255,252,235,0) 100%);"></div>
<div class="a" style="left:947.5px;top:1767px;width:46px;height:46px;border-radius:50%;background:radial-gradient(circle closest-side, #fde47e 0%, #fddd6c 62%, #fdeea8 66%, #fff6cf 80%, #fffae4 90%, rgba(255,252,235,0) 100%);"></div>
<div class="a" style="left:1077.9px;top:1767px;width:46px;height:46px;border-radius:50%;background:radial-gradient(circle closest-side, #fde47e 0%, #fddd6c 62%, #fdeea8 66%, #fff6cf 80%, #fffae4 90%, rgba(255,252,235,0) 100%);"></div>
<div class="a" style="left:1208.2px;top:1767px;width:46px;height:46px;border-radius:50%;background:radial-gradient(circle closest-side, rgba(253,243,208,0.85) 0%, rgba(253,243,208,0.85) 72%, rgba(255,255,255,0) 100%);"></div><svg style="left:1207.2px;top:1774px" width="48" height="32"><g stroke="#cdb98f" stroke-width="3" stroke-linecap="round"><path d="M10.5 4 H27.5"/><path d="M7 10 H8 M19.5 10 H37.5"/><path d="M4.5 16 H30.5 M37.5 16 H42.5"/><path d="M8.5 21.4 H20.5 M29 21.4 H31"/><path d="M22 27.4 H38"/><path d="M12 18.5 H24" stroke-width="4"/></g></svg>
<div class="a" style="left:1338.5px;top:1767px;width:46px;height:46px;border-radius:50%;background:radial-gradient(circle closest-side, rgba(253,243,208,0.85) 0%, rgba(253,243,208,0.85) 72%, rgba(255,255,255,0) 100%);"></div><svg style="left:1337.5px;top:1774px" width="48" height="32"><g stroke="#cdb98f" stroke-width="3" stroke-linecap="round"><path d="M10.5 4 H27.5"/><path d="M7 10 H8 M19.5 10 H37.5"/><path d="M4.5 16 H30.5 M37.5 16 H42.5"/><path d="M8.5 21.4 H20.5 M29 21.4 H31"/><path d="M22 27.4 H38"/><path d="M12 18.5 H24" stroke-width="4"/></g></svg>
<div class="a" style="left:1468.8px;top:1767px;width:46px;height:46px;border-radius:50%;background:radial-gradient(circle closest-side, rgba(253,243,208,0.85) 0%, rgba(253,243,208,0.85) 72%, rgba(255,255,255,0) 100%);"></div><svg style="left:1467.8px;top:1774px" width="48" height="32"><g stroke="#cdb98f" stroke-width="3" stroke-linecap="round"><path d="M10.5 4 H27.5"/><path d="M7 10 H8 M19.5 10 H37.5"/><path d="M4.5 16 H30.5 M37.5 16 H42.5"/><path d="M8.5 21.4 H20.5 M29 21.4 H31"/><path d="M22 27.4 H38"/><path d="M12 18.5 H24" stroke-width="4"/></g></svg>
<div class="a" style="left:1599.1px;top:1767px;width:46px;height:46px;border-radius:50%;background:radial-gradient(circle closest-side, rgba(253,243,208,0.85) 0%, rgba(253,243,208,0.85) 72%, rgba(255,255,255,0) 100%);"></div><svg style="left:1598.1px;top:1774px" width="48" height="32"><g stroke="#cdb98f" stroke-width="3" stroke-linecap="round"><path d="M10.5 4 H27.5"/><path d="M7 10 H8 M19.5 10 H37.5"/><path d="M4.5 16 H30.5 M37.5 16 H42.5"/><path d="M8.5 21.4 H20.5 M29 21.4 H31"/><path d="M22 27.4 H38"/><path d="M12 18.5 H24" stroke-width="4"/></g></svg>
<div class="a" style="left:1729.4px;top:1767px;width:46px;height:46px;border-radius:50%;background:radial-gradient(circle closest-side, rgba(232,232,232,0.8) 0%, rgba(232,232,232,0.8) 72%, rgba(255,255,255,0) 100%);"></div><svg style="left:1728.4px;top:1774px" width="48" height="32"><g stroke="#d5cfc2" stroke-width="3" stroke-linecap="round"><path d="M10.5 4 H27.5"/><path d="M7 10 H8 M19.5 10 H37.5"/><path d="M4.5 16 H30.5 M37.5 16 H42.5"/><path d="M8.5 21.4 H20.5 M29 21.4 H31"/><path d="M22 27.4 H38"/><path d="M12 18.5 H24" stroke-width="4"/></g></svg>
<div class="a" style="left:1859.7px;top:1767px;width:46px;height:46px;border-radius:50%;background:radial-gradient(circle closest-side, rgba(232,232,232,0.8) 0%, rgba(232,232,232,0.8) 72%, rgba(255,255,255,0) 100%);"></div><svg style="left:1858.7px;top:1774px" width="48" height="32"><g stroke="#d5cfc2" stroke-width="3" stroke-linecap="round"><path d="M10.5 4 H27.5"/><path d="M7 10 H8 M19.5 10 H37.5"/><path d="M4.5 16 H30.5 M37.5 16 H42.5"/><path d="M8.5 21.4 H20.5 M29 21.4 H31"/><path d="M22 27.4 H38"/><path d="M12 18.5 H24" stroke-width="4"/></g></svg>
<div class="a" style="left:1990.0px;top:1767px;width:46px;height:46px;border-radius:50%;background:radial-gradient(circle closest-side, rgba(232,232,232,0.8) 0%, rgba(232,232,232,0.8) 72%, rgba(255,255,255,0) 100%);"></div><svg style="left:1989.0px;top:1774px" width="48" height="32"><g stroke="#d5cfc2" stroke-width="3" stroke-linecap="round"><path d="M10.5 4 H27.5"/><path d="M7 10 H8 M19.5 10 H37.5"/><path d="M4.5 16 H30.5 M37.5 16 H42.5"/><path d="M8.5 21.4 H20.5 M29 21.4 H31"/><path d="M22 27.4 H38"/><path d="M12 18.5 H24" stroke-width="4"/></g></svg>
<div class="a" style="left:2120.3px;top:1767px;width:46px;height:46px;border-radius:50%;background:radial-gradient(circle closest-side, rgba(232,232,232,0.8) 0%, rgba(232,232,232,0.8) 72%, rgba(255,255,255,0) 100%);"></div><svg style="left:2119.3px;top:1774px" width="48" height="32"><g stroke="#d5cfc2" stroke-width="3" stroke-linecap="round"><path d="M10.5 4 H27.5"/><path d="M7 10 H8 M19.5 10 H37.5"/><path d="M4.5 16 H30.5 M37.5 16 H42.5"/><path d="M8.5 21.4 H20.5 M29 21.4 H31"/><path d="M22 27.4 H38"/><path d="M12 18.5 H24" stroke-width="4"/></g></svg>
<div class="a" style="left:2250.7px;top:1767px;width:46px;height:46px;border-radius:50%;background:radial-gradient(circle closest-side, rgba(232,232,232,0.8) 0%, rgba(232,232,232,0.8) 72%, rgba(255,255,255,0) 100%);"></div><svg style="left:2249.7px;top:1774px" width="48" height="32"><g stroke="#d5cfc2" stroke-width="3" stroke-linecap="round"><path d="M10.5 4 H27.5"/><path d="M7 10 H8 M19.5 10 H37.5"/><path d="M4.5 16 H30.5 M37.5 16 H42.5"/><path d="M8.5 21.4 H20.5 M29 21.4 H31"/><path d="M22 27.4 H38"/><path d="M12 18.5 H24" stroke-width="4"/></g></svg>
<div class="a" style="left:2381.0px;top:1767px;width:46px;height:46px;border-radius:50%;background:radial-gradient(circle closest-side, rgba(232,232,232,0.8) 0%, rgba(232,232,232,0.8) 72%, rgba(255,255,255,0) 100%);"></div><svg style="left:2380.0px;top:1774px" width="48" height="32"><g stroke="#d5cfc2" stroke-width="3" stroke-linecap="round"><path d="M10.5 4 H27.5"/><path d="M7 10 H8 M19.5 10 H37.5"/><path d="M4.5 16 H30.5 M37.5 16 H42.5"/><path d="M8.5 21.4 H20.5 M29 21.4 H31"/><path d="M22 27.4 H38"/><path d="M12 18.5 H24" stroke-width="4"/></g></svg>
<div class="a" style="left:279px;top:1638px;width:2px;height:382px;background:#1f1f1f;"></div>
<div class="a" style="left:2103px;top:1638px;width:2px;height:346px;background:#1f1f1f;"></div>

<div class="t" style="left:1046.40px;top:9.68px;font-size:12.9px;font-weight:normal;letter-spacing:0.310px;color:#101010;">Dereel, Victoria | The Bureau of Meteorology — Mozilla Firefox</div>
<div class="t" style="left:11.70px;top:35.76px;font-size:12.8px;font-weight:normal;letter-spacing:-0.068px;color:#15141a;">File</div>
<div class="t" style="left:45.30px;top:35.76px;font-size:12.8px;font-weight:normal;letter-spacing:0.635px;color:#15141a;">Edit</div>
<div class="t" style="left:83.70px;top:35.76px;font-size:12.8px;font-weight:normal;letter-spacing:0.245px;color:#15141a;">View</div>
<div class="t" style="left:125.20px;top:35.76px;font-size:12.8px;font-weight:normal;letter-spacing:0.831px;color:#15141a;">History</div>
<div class="t" style="left:183.20px;top:35.76px;font-size:12.8px;font-weight:normal;letter-spacing:0.999px;color:#15141a;">Bookmarks</div>
<div class="t" style="left:267.40px;top:35.76px;font-size:12.8px;font-weight:normal;letter-spacing:0.704px;color:#15141a;">Profiles</div>
<div class="t" style="left:328.20px;top:35.76px;font-size:12.8px;font-weight:normal;letter-spacing:0.706px;color:#15141a;">Tools</div>
<div class="t" style="left:373.00px;top:35.76px;font-size:12.8px;font-weight:normal;letter-spacing:1.099px;color:#15141a;">Help</div>
<div class="t" style="left:80.30px;top:71.16px;font-size:13.4px;font-weight:normal;letter-spacing:0.295px;color:#15141a;">Incidents and Warnings - V</div>
<div class="t" style="left:306.00px;top:71.16px;font-size:13.4px;font-weight:normal;letter-spacing:0.448px;color:#15141a;">Dereel, Victoria | The Bure</div>
<div class="t" style="left:530.80px;top:71.16px;font-size:13.4px;font-weight:normal;letter-spacing:0.556px;color:#15141a;">Dereel weather observatio</div>
<div class="t" style="left:735.00px;top:71.16px;font-size:13.4px;font-weight:normal;letter-spacing:0.636px;color:#15141a;">/eureka/home/var/tmp/mutt-f</div>
<div class="t" style="left:36.40px;top:148.09px;font-size:13.6px;font-weight:normal;letter-spacing:0.766px;color:#15141a;">Home</div>
<div class="t" style="left:107.50px;top:148.09px;font-size:13.6px;font-weight:normal;letter-spacing:0.066px;color:#15141a;">Subcategories</div>
<div class="t" style="left:228.50px;top:148.09px;font-size:13.6px;font-weight:normal;letter-spacing:0.129px;color:#15141a;">Google Gemini</div>
<div class="t" style="left:353.40px;top:148.09px;font-size:13.6px;font-weight:normal;letter-spacing:0.141px;color:#15141a;">Greg's photos</div>
<div class="t" style="left:472.50px;top:148.09px;font-size:13.6px;font-weight:normal;letter-spacing:0.058px;color:#15141a;">Greg's diary</div>
<div class="t" style="left:578.60px;top:148.09px;font-size:13.6px;font-weight:normal;letter-spacing:0.090px;color:#15141a;">YouTube</div>
<div class="t" style="left:664.50px;top:148.09px;font-size:13.6px;font-weight:normal;letter-spacing:0.016px;color:#15141a;">eBay Australia</div>
<div class="t" style="left:784.60px;top:148.09px;font-size:13.6px;font-weight:normal;letter-spacing:0.140px;color:#15141a;">Freezer contents</div>
<div class="t" style="left:921.90px;top:148.09px;font-size:13.6px;font-weight:normal;letter-spacing:0.088px;color:#15141a;">Greg's cooking recipes</div>
<div class="t" style="left:2278.00px;top:113.14px;font-size:14.6px;font-weight:normal;letter-spacing:-0.484px;color:#15141a;">Sign in</div>
<div class="t" style="left:274.00px;top:206.43px;font-size:36px;font-weight:bold;letter-spacing:-1.630px;color:#1f1f1f;">The Bureau of Meteorology</div>
<div class="t" style="left:814.30px;top:209.30px;font-size:31.3px;font-weight:normal;letter-spacing:0.592px;color:#1f1f1f;">Weather and climate</div>
<div class="t" style="left:1215.40px;top:209.30px;font-size:31.3px;font-weight:normal;letter-spacing:0.743px;color:#1f1f1f;">Government and industry</div>
<div class="t" style="left:1687.20px;top:209.30px;font-size:31.3px;font-weight:normal;letter-spacing:0.332px;color:#1f1f1f;">Resources</div>
<div class="t" style="left:368.60px;top:299.77px;font-size:28.5px;font-weight:normal;letter-spacing:0.689px;color:#ffffff;">Weather and climate</div>
<div class="t" style="left:717.20px;top:299.77px;font-size:28.5px;font-weight:normal;letter-spacing:0.746px;color:#ffffff;">Forecasts and observations</div>
<div class="t" style="left:1163.60px;top:299.77px;font-size:28.5px;font-weight:normal;letter-spacing:0.733px;color:#ffffff;">Victoria</div>
<div class="t" style="left:1340.00px;top:299.77px;font-size:28.5px;font-weight:normal;letter-spacing:0.910px;color:#ffffff;">Central</div>
<div class="t" style="left:1512.00px;top:299.77px;font-size:28.5px;font-weight:bold;letter-spacing:0.755px;color:#ffffff;">Dereel</div>
<div class="t" style="left:272.10px;top:397.50px;font-size:79.5px;font-weight:normal;letter-spacing:-0.686px;color:#1f1f1f;-webkit-text-stroke:0.9px #1f1f1f;">Dereel</div>
<div class="t" style="left:2035.60px;top:422.37px;font-size:29.1px;font-weight:normal;letter-spacing:0.514px;color:#1f1f1f;">Favourite location</div>
<div class="t" style="left:361.60px;top:539.86px;font-size:28.4px;font-weight:normal;letter-spacing:0.980px;color:#1f1f1f;">2 warnings for this location</div>
<div class="t" style="left:299.80px;top:622.11px;font-size:29.4px;font-weight:bold;letter-spacing:-0.330px;color:#1f1f1f;">Fire Weather Warning</div>
<div class="t" style="left:299.80px;top:706.31px;font-size:29.4px;font-weight:bold;letter-spacing:-0.166px;color:#1f1f1f;">Heatwave warning</div>
<div class="t" style="left:273.70px;top:792.57px;font-size:31.7px;font-weight:normal;letter-spacing:0.422px;color:#1f1f1f;">Today</div>
<div class="t" style="left:471.30px;top:792.57px;font-size:31.7px;font-weight:normal;letter-spacing:0.357px;color:#3a3a3a;">7 days</div>
<div class="t" style="left:675.40px;top:792.57px;font-size:31.7px;font-weight:normal;letter-spacing:0.066px;color:#3a3a3a;">Past</div>
<div class="t" style="left:273.70px;top:885.65px;font-size:82.4px;font-weight:normal;letter-spacing:0.261px;color:#1f1f1f;-webkit-text-stroke:1.2px #1f1f1f;">32.0°</div>
<div class="t" style="left:272.90px;top:984.32px;font-size:31.4px;font-weight:normal;letter-spacing:-0.103px;color:#1f1f1f;">Feels like</div>
<div class="t" style="left:420.60px;top:984.32px;font-size:31.4px;font-weight:bold;letter-spacing:1.126px;color:#1f1f1f;">25.0°</div>
<div class="t" style="left:274.30px;top:1068.72px;font-size:52.9px;font-weight:bold;letter-spacing:1.885px;color:#1f1f1f;">44°</div>
<div class="t" style="left:410.80px;top:1068.72px;font-size:52.9px;font-weight:normal;letter-spacing:-3.415px;color:#1f1f1f;">17°</div>
<div class="t" style="left:272.80px;top:1135.72px;font-size:31.4px;font-weight:normal;letter-spacing:-0.053px;color:#1f1f1f;">Max</div>
<div class="t" style="left:413.40px;top:1135.72px;font-size:31.4px;font-weight:normal;letter-spacing:0.572px;color:#1f1f1f;">Overnight min</div>
<div class="t" style="left:958.00px;top:965.98px;font-size:52px;font-weight:bold;letter-spacing:-0.583px;color:#1f1f1f;">Hazy.</div>
<div class="t" style="left:958.00px;top:1068.78px;font-size:52px;font-weight:bold;letter-spacing:-2.611px;color:#1f1f1f;">No rain</div>
<div class="t" style="left:1852.30px;top:1100.89px;font-size:28.6px;font-weight:bold;letter-spacing:-0.112px;color:#1f1f1f;">Rain radar and weather map</div>
<div class="t" style="left:273.20px;top:1279.72px;font-size:31.4px;font-weight:bold;letter-spacing:-0.261px;color:#2a5fdb;">Show more about today</div>
<div class="t" style="left:271.70px;top:1405.03px;font-size:52.3px;font-weight:normal;letter-spacing:-0.203px;color:#1f1f1f;">Hourly forecast</div>
<div class="t" style="left:2075.00px;top:1424.69px;font-size:28.6px;font-weight:bold;letter-spacing:0.066px;color:#2a5fdb;">Text only table</div>
<div class="t" style="left:294.00px;top:1527.69px;font-size:28.6px;font-weight:normal;letter-spacing:0.690px;color:#ffffff;">Temperature and rain</div>
<div class="t" style="left:633.30px;top:1527.69px;font-size:28.6px;font-weight:normal;letter-spacing:0.186px;color:#2a5fdb;">Wind</div>
<div class="t" style="left:752.90px;top:1527.69px;font-size:28.6px;font-weight:normal;letter-spacing:0.793px;color:#2a5fdb;">Humidity, UV and cloud</div>
<div class="t" style="left:1120.40px;top:1527.69px;font-size:28.6px;font-weight:normal;letter-spacing:0.553px;color:#2a5fdb;">Show all</div>
<div class="t" style="left:294.10px;top:1647.07px;font-size:29.8px;font-weight:bold;letter-spacing:-1.366px;color:#1f1f1f;">Today</div>
<div class="t" style="left:2117.70px;top:1647.07px;font-size:29.8px;font-weight:bold;letter-spacing:-1.283px;color:#1f1f1f;">Tomorrow</div>
<div class="t" style="left:294.10px;top:2004.72px;font-size:28.8px;font-weight:normal;letter-spacing:-0.012px;color:#1f1f1f;">Feels like</div>
<div class="t" style="left:293.00px;top:1716.62px;font-size:28.8px;font-weight:normal;letter-spacing:0.000px;color:#1f1f1f;">10 am</div>
<div class="t" style="left:294.70px;top:1929.15px;font-size:31.6px;font-weight:normal;letter-spacing:1.879px;color:#1f1f1f;">30°</div>
<div class="t" style="left:423.31px;top:1716.62px;font-size:28.8px;font-weight:normal;letter-spacing:0.000px;color:#1f1f1f;">11 am</div>
<div class="t" style="left:425.01px;top:1929.15px;font-size:31.6px;font-weight:normal;letter-spacing:1.879px;color:#1f1f1f;">34°</div>
<div class="t" style="left:553.62px;top:1716.62px;font-size:28.8px;font-weight:normal;letter-spacing:0.000px;color:#1f1f1f;">12 pm</div>
<div class="t" style="left:555.32px;top:1929.15px;font-size:31.6px;font-weight:normal;letter-spacing:1.879px;color:#1f1f1f;">37°</div>
<div class="t" style="left:683.93px;top:1716.62px;font-size:28.8px;font-weight:normal;letter-spacing:0.000px;color:#1f1f1f;">1 pm</div>
<div class="t" style="left:686.63px;top:1929.15px;font-size:31.6px;font-weight:normal;letter-spacing:1.379px;color:#1f1f1f;">40°</div>
<div class="t" style="left:815.24px;top:1716.62px;font-size:28.8px;font-weight:normal;letter-spacing:0.000px;color:#1f1f1f;">2 pm</div>
<div class="t" style="left:816.94px;top:1929.15px;font-size:31.6px;font-weight:normal;letter-spacing:1.379px;color:#1f1f1f;">42°</div>
<div class="t" style="left:945.55px;top:1716.62px;font-size:28.8px;font-weight:normal;letter-spacing:0.000px;color:#1f1f1f;">3 pm</div>
<div class="t" style="left:947.25px;top:1929.15px;font-size:31.6px;font-weight:normal;letter-spacing:1.379px;color:#1f1f1f;">44°</div>
<div class="t" style="left:1076.86px;top:1716.62px;font-size:28.8px;font-weight:normal;letter-spacing:0.000px;color:#1f1f1f;">4 pm</div>
<div class="t" style="left:1077.56px;top:1929.15px;font-size:31.6px;font-weight:normal;letter-spacing:1.379px;color:#1f1f1f;">44°</div>
<div class="t" style="left:1206.17px;top:1716.62px;font-size:28.8px;font-weight:normal;letter-spacing:0.000px;color:#1f1f1f;">5 pm</div>
<div class="t" style="left:1207.87px;top:1929.15px;font-size:31.6px;font-weight:normal;letter-spacing:1.379px;color:#1f1f1f;">44°</div>
<div class="t" style="left:1336.48px;top:1716.62px;font-size:28.8px;font-weight:normal;letter-spacing:0.000px;color:#1f1f1f;">6 pm</div>
<div class="t" style="left:1338.18px;top:1929.15px;font-size:31.6px;font-weight:normal;letter-spacing:1.379px;color:#1f1f1f;">41°</div>
<div class="t" style="left:1466.79px;top:1716.62px;font-size:28.8px;font-weight:normal;letter-spacing:0.000px;color:#1f1f1f;">7 pm</div>
<div class="t" style="left:1467.49px;top:1929.15px;font-size:31.6px;font-weight:normal;letter-spacing:1.879px;color:#1f1f1f;">36°</div>
<div class="t" style="left:1597.10px;top:1716.62px;font-size:28.8px;font-weight:normal;letter-spacing:0.000px;color:#1f1f1f;">8 pm</div>
<div class="t" style="left:1597.80px;top:1929.15px;font-size:31.6px;font-weight:normal;letter-spacing:1.879px;color:#1f1f1f;">30°</div>
<div class="t" style="left:1727.41px;top:1716.62px;font-size:28.8px;font-weight:normal;letter-spacing:0.000px;color:#1f1f1f;">9 pm</div>
<div class="t" style="left:1728.11px;top:1929.15px;font-size:31.6px;font-weight:normal;letter-spacing:1.879px;color:#1f1f1f;">26°</div>
<div class="t" style="left:1856.72px;top:1716.62px;font-size:28.8px;font-weight:normal;letter-spacing:0.000px;color:#1f1f1f;">10 pm</div>
<div class="t" style="left:1858.42px;top:1929.15px;font-size:31.6px;font-weight:normal;letter-spacing:1.879px;color:#1f1f1f;">23°</div>
<div class="t" style="left:1987.03px;top:1716.62px;font-size:28.8px;font-weight:normal;letter-spacing:0.000px;color:#1f1f1f;">11 pm</div>
<div class="t" style="left:1988.73px;top:1929.15px;font-size:31.6px;font-weight:normal;letter-spacing:1.879px;color:#1f1f1f;">22°</div>
<div class="t" style="left:2117.34px;top:1716.62px;font-size:28.8px;font-weight:normal;letter-spacing:0.000px;color:#1f1f1f;">12 am</div>
<div class="t" style="left:2119.04px;top:1929.15px;font-size:31.6px;font-weight:normal;letter-spacing:1.879px;color:#1f1f1f;">21°</div>
<div class="t" style="left:2247.65px;top:1716.62px;font-size:28.8px;font-weight:normal;letter-spacing:0.000px;color:#1f1f1f;">1 am</div>
<div class="t" style="left:2249.35px;top:1929.15px;font-size:31.6px;font-weight:normal;letter-spacing:1.879px;color:#1f1f1f;">21°</div>
<div class="t" style="left:2378.96px;top:1716.62px;font-size:28.8px;font-weight:normal;letter-spacing:0.000px;color:#1f1f1f;">2 am</div>
<div class="t" style="left:2379.66px;top:1929.15px;font-size:31.6px;font-weight:normal;letter-spacing:1.879px;color:#1f1f1f;">20°</div>
<div class="a" style="left:2268px;top:1690px;width:221px;height:330px;background:linear-gradient(90deg, rgba(255,255,255,0.62) 0%, rgba(255,255,255,0.85) 40%, rgba(255,255,255,0.96) 75%, rgba(255,255,255,1) 100%);"></div>
<div class="a" style="left:2266px;top:1638px;width:2px;height:382px;background:#1f1f1f;"></div>
<div class="a" style="left:2178px;top:1830px;width:72px;height:72px;border-radius:50%;border:3px solid #2a5fdb;background:#fff;"></div>
<svg style="left:2194px;top:1850px" width="46" height="40"><path d="M4 19 H37 M24 6 L37 19 L24 32" fill="none" stroke="#2a5fdb" stroke-width="3.2"/></svg>

<!-- frame borders on top -->
<div class="a" style="left:2px;top:2020px;width:2490px;height:2px;background:#9af89a;"></div>
<div class="a" style="left:2px;top:2022px;width:2492px;height:2px;background:#339933;"></div>
<div class="a" style="left:2490px;top:30px;width:2px;height:1992px;background:#9af89a;"></div>
<div class="a" style="left:2490px;top:1995px;width:4px;height:1px;background:#2f7f2f;"></div>
<div class="a" style="left:2465px;top:2020px;width:1px;height:4px;background:#2f7f2f;"></div>
<div class="a" style="left:0px;top:1995px;width:4px;height:1px;background:#2f7f2f;"></div>
<div class="a" style="left:28px;top:2020px;width:1px;height:4px;background:#2f7f2f;"></div>
<div class="a" style="left:2492px;top:30px;width:2px;height:1994px;background:#339933;"></div>

</body></html>
